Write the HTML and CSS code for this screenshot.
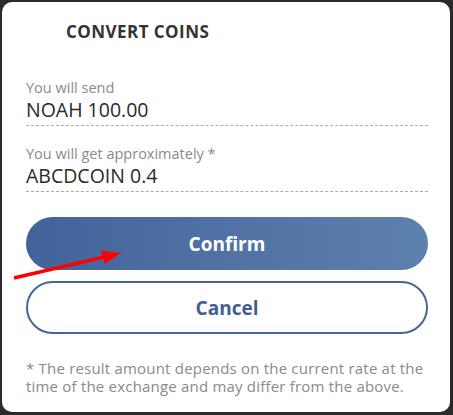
FILE: index.html
```html
<!DOCTYPE html>
<html>
<head>
<meta charset="utf-8">
<link rel="stylesheet" href="styles.css">
</head>
<body>
<div class="modal">
  <h1 class="title">CONVERT COINS</h1>
  <div class="field">
    <div class="label">You will send</div>
    <div class="value">NOAH 100.00</div>
  </div>
  <div class="field">
    <div class="label">You will get approximately *</div>
    <div class="value">ABCDCOIN 0.4</div>
  </div>
  <div class="buttons">
    <button class="btn btn-primary">Confirm</button>
    <button class="btn btn-secondary">Cancel</button>
  </div>
  <p class="note">* The result amount depends on the current rate at the time of the exchange and may differ from the above.</p>
</div>
<svg class="arrow" width="130" height="40" viewBox="0 0 130 40">
  <line x1="14" y1="35" x2="104" y2="14" stroke="#ff0000" stroke-width="3.5"/>
  <polygon points="121,10 101,7.6 104.5,21" fill="#ff0000"/>
</svg>
</body>
</html>
```
FILE: styles.css
```css
html, body {
  margin: 0;
  padding: 0;
  background: #2a2a2a;
  width: 453px;
  height: 415px;
  overflow: hidden;
  font-family: "Open Sans", "Noto Sans", sans-serif;
}
body {
  padding: 2px 3px 3px 2px;
  box-sizing: border-box;
  position: relative;
}
.modal {
  background: #ffffff;
  border-radius: 10px;
  height: 410px;
  box-sizing: border-box;
  padding: 18px 22px 0 24px;
}
.title {
  margin: 0 0 0 40px;
  font-size: 17px;
  font-weight: 700;
  color: #333333;
  letter-spacing: 0.45px;
  line-height: 24px;
}
.field {
  border-bottom: 1px dashed #aaaaaa;
  margin-top: 34px;
  padding-bottom: 3px;
}
.field + .field {
  margin-top: 18px;
}
.label {
  font-size: 14.5px;
  color: #8a8a8a;
  line-height: 20px;
}
.value {
  font-size: 19.5px;
  color: #2a2a2a;
  line-height: 24px;
}
.buttons {
  display: flex;
  flex-direction: column;
  gap: 11px;
  margin-top: 25px;
}
.btn {
  height: 53px;
  border-radius: 27px;
  font-family: inherit;
  font-size: 19px;
  font-weight: 700;
  cursor: pointer;
  box-sizing: border-box;
}
.btn-primary {
  border: none;
  color: #ffffff;
  background: linear-gradient(to right, #42639a, #5d81ae);
}
.btn-secondary {
  border: 2px solid #44659a;
  background: #ffffff;
  color: #3f5f92;
}
.note {
  margin: 25px 0 0 0;
  font-size: 15px;
  letter-spacing: 0.2px;
  line-height: 18px;
  color: #8a8a8a;
}
.arrow {
  position: absolute;
  left: 0;
  top: 243px;
}
```
